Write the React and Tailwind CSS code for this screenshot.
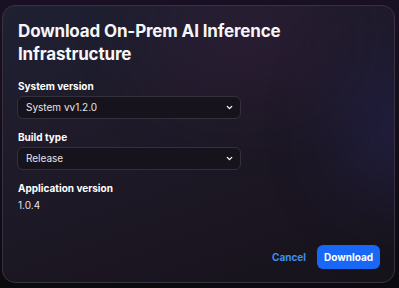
import { ChevronDown } from "lucide-react";

function Select({ value }) {
  return (
    <div className="flex h-[23px] w-[224px] items-center justify-between rounded-[6px] border border-[#34303b] bg-[#16131c] pl-[8px] pr-[6px] text-[10px] text-[#e6e4ea]">
      <span>{value}</span>
      <ChevronDown className="h-[9px] w-[9px] text-white" strokeWidth={3.5} />
    </div>
  );
}

export default function App() {
  return (
    <div
      className="h-[288px] w-[399px] bg-[linear-gradient(180deg,#1a1024_0%,#120d19_60%,#0b0a0f_100%)] pl-[2px] pr-[4px] pt-[5px] pb-[5px]"
      style={{ fontFamily: "Inter, 'Noto Sans', sans-serif" }}
    >
      <div className="relative flex h-full flex-col overflow-hidden rounded-[13px] border border-[#38323f] bg-[linear-gradient(160deg,#1e2133_0%,#1f1b2a_35%,#1a1520_75%,#16131b_100%)] pl-[14px] pr-[14px] pt-[14px] pb-[13px]">
        <div className="pointer-events-none absolute right-[-60px] top-[50px] h-[140px] w-[110px] rounded-full bg-[#2a2c70] opacity-40 blur-[40px]" />
        <div className="pointer-events-none absolute right-[60px] top-[-30px] h-[120px] w-[180px] rounded-full bg-[#3a1f3e] opacity-40 blur-[40px]" />
        <div className="relative flex flex-1 flex-col">
          <h1 className="pl-[1px] text-[17px] font-bold leading-[23px] tracking-[-0.15px] text-[#f6f5f8]">
            Download On-Prem AI Inference Infrastructure
          </h1>
          <div className="mt-[13px] pl-[1px] text-[10px] font-bold leading-[14px] text-white">System version</div>
          <div className="mt-[3px]"><Select value="System vv1.2.0" /></div>
          <div className="mt-[11px] pl-[1px] text-[10px] font-bold leading-[14px] text-white">Build type</div>
          <div className="mt-[3px]"><Select value="Release" /></div>
          <div className="mt-[11px] pl-[1px] text-[10px] font-bold leading-[14px] text-white">Application version</div>
          <div className="mt-[3px] pl-[1px] text-[10px] leading-[14px] text-[#e2e0e6]">1.0.4</div>
          <div className="mt-auto flex items-center justify-end gap-[11px]">
            <button className="text-[10px] font-bold text-[#3f8ef0]">Cancel</button>
            <button className="h-[24px] w-[63px] rounded-[6px] bg-[#1967f7] text-[10px] font-bold text-white">Download</button>
          </div>
        </div>
      </div>
    </div>
  );
}
